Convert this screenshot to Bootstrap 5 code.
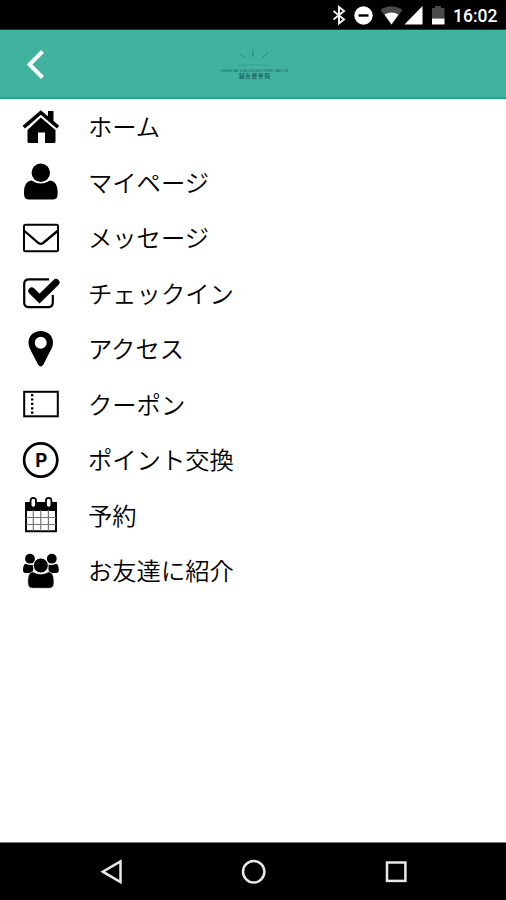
<!DOCTYPE html>
<html lang="ja">
<head>
<meta charset="utf-8">
<meta name="viewport" content="width=device-width, initial-scale=1">
<title>メニュー</title>
<link href="https://cdn.jsdelivr.net/npm/bootstrap@5.3.0/dist/css/bootstrap.min.css" rel="stylesheet">
<style>
body{font-family:"Noto Sans CJK JP",sans-serif;height:900px;color:#000;overflow:hidden}
svg{display:block;flex:none}
.status-bar{height:30px;border-bottom:1px solid #163b34}
.app-bar{height:69px;background:#40b29e;border-bottom:2px solid #1fa58d;padding-left:25px}
.brand-logo{margin-left:171px}
.clock{font:500 17.500px/30px Roboto,sans-serif;width:45px;margin-left:7px;padding-top:2px}
.menu-row{height:55.5px;padding:0 0 0 21px;gap:27px;font-size:24.3px;line-height:1;font-weight:350}
.menu-row span{padding-bottom:1px}
.system-bar{height:58.5px;border-top:1px solid #777}
</style>
<script src="https://cdn.jsdelivr.net/npm/bootstrap@5.3.0/dist/js/bootstrap.bundle.min.js"></script>
</head>
<body class="d-flex flex-column bg-white">
<div class="status-bar bg-black text-white d-flex justify-content-end align-items-center flex-shrink-0 pe-2">
<svg width="116" height="30" viewBox="330 0 116 30">
<path d="M333.500 11l10.500 8.500-5 4V7l5 4-10.500 8.500" fill="none" stroke="#eee" stroke-width="2"/>
<circle cx="363.500" cy="15.500" r="9.200" fill="#fff"/><path d="M358.500 15.500h10" stroke="#000" stroke-width="2.400"/>
<path d="M380.500 10q11-7.500 22 0L391.500 24.500z" fill="#4a4a4a"/><path d="M384.500 14.500q7-4 14 0L391.500 24.500z" fill="#fff"/>
<path d="M404.500 24.500H422.500V6z" fill="#fff"/>
<path d="M432 8h3V6h6v2h3.500v10.500H432z" fill="#4a4a4a"/><path d="M432 18.500h12.500v6H432z" fill="#fff"/>
</svg>
<span class="clock text-nowrap">16:02</span>
</div>
<header class="app-bar d-flex align-items-center flex-shrink-0">
<svg width="22" height="32" viewBox="0 0 22 32"><path d="M17.500 3.500L4.500 16.500l13 13" fill="none" stroke="#fff" stroke-width="4"/></svg>
<svg class="brand-logo" width="72" height="36" viewBox="218 46.500 72 36">
<g stroke="#24796c" stroke-width="1" opacity=".75"><path d="M253 50v7.500M240 54l5 4.500M268 53.500l-6.500 5.500"/><path d="M238 66q15-2 30 0" fill="none" opacity=".4"/></g>
<text x="220" y="72.300" font-family="Liberation Sans, sans-serif" font-size="3.400" textLength="68" lengthAdjust="spacingAndGlyphs" fill="#24675e">ORIENTAL &amp; ACUPUNCTURE SALON</text>
<text x="239" y="78" font-family="Noto Sans CJK JP, sans-serif" font-weight="700" font-size="5.500" textLength="31" fill="#23685e">鍼灸整骨院</text>
</svg>
</header>
<main class="flex-grow-1">
<div class="menu-row d-flex align-items-center">
<svg width="40" height="44" viewBox="0 0 40 44"><path d="M2.800 22.200L19.800 7.500 37 22.200" fill="none" stroke="#000" stroke-width="3.600"/><path d="M27 6h5.500v12L27 13.500zM19.800 12.500L34.500 25v11.500a1.500 1.500 0 0 1-1.500 1.500H24V27.500h-7V38H8a1.500 1.500 0 0 1-1.500-1.500V25z"/></svg>
<span>ホーム</span></div>
<div class="menu-row d-flex align-items-center">
<svg width="40" height="44" viewBox="0 0 40 44"><circle cx="19.800" cy="12.800" r="9.200"/><path d="M10.500 20.500q9.300 6 18.600 0c6 1 8 6 7.500 14.500q-.3 4.500-5 4.500H8q-4.600 0-4.900-4.500C2.600 26.500 4.500 21.500 10.500 20.500z"/></svg>
<span>マイページ</span></div>
<div class="menu-row d-flex align-items-center">
<svg width="40" height="44" viewBox="0 0 40 44" fill="none" stroke="#000" stroke-width="2"><rect x="3" y="8.700" width="34" height="26.500" rx="1.500"/><path d="M3.500 15L17.500 27q2.300 1.700 4.600 0L36.500 15" stroke-width="2.300"/></svg>
<span>メッセージ</span></div>
<div class="menu-row d-flex align-items-center">
<svg width="40" height="44" viewBox="0 0 40 44" fill="none" stroke="#000"><path d="M28 8.300H8Q3.200 8.300 3.200 13v18.500q0 4.700 4.800 4.700h19q4.800 0 4.800-4.700V24" stroke-width="2.200"/><path d="M10.800 20l7.700 7.500L35 11.500" stroke-width="7" stroke-linecap="round" stroke-linejoin="miter"/></svg>
<span>チェックイン</span></div>
<div class="menu-row d-flex align-items-center">
<svg width="40" height="44" viewBox="0 0 40 44"><path fill-rule="evenodd" d="M19.700 4C12.500 4 7.500 9 7.500 15.500c0 4 1.500 6.500 2.800 9L17 37.500q2.700 4 5.400 0L29 24.500c1.500-2.500 3-5 3-9C32 9 27 4 19.700 4zM19.700 9.700a6 6 0 1 1 0 12 6 6 0 0 1 0-12z"/></svg>
<span>アクセス</span></div>
<div class="menu-row d-flex align-items-center">
<svg width="40" height="44" viewBox="0 0 40 44" fill="none" stroke="#000"><rect x="3.200" y="9.800" width="33.600" height="24.500" stroke-width="2"/><path d="M11.200 12v20" stroke-width="2.400" stroke-dasharray="2.200 2.200"/></svg>
<span>クーポン</span></div>
<div class="menu-row d-flex align-items-center">
<svg width="40" height="44" viewBox="0 0 40 44"><circle cx="19.700" cy="22" r="16.600" fill="none" stroke="#000" stroke-width="2.700"/><text x="20.300" y="28.600" text-anchor="middle" font-family="Inter, sans-serif" font-weight="700" font-size="18.500">P</text></svg>
<span>ポイント交換</span></div>
<div class="menu-row d-flex align-items-center">
<svg width="40" height="44" viewBox="0 0 40 44"><path d="M4 9h32v9H4z"/><path d="M5 17v21.300h30V17" fill="none" stroke="#000" stroke-width="1.900"/><path d="M12.300 17v21M19.800 17v21M27.400 17v21M5 24.500h30M5 31.500h30" stroke="#777" stroke-width="1.200"/><g fill="#fff" stroke="#000" stroke-width="1.800"><rect x="9.600" y="4.900" width="5.400" height="9.800" rx="2.700"/><rect x="25" y="4.900" width="5.400" height="9.800" rx="2.700"/></g></svg>
<span>予約</span></div>
<div class="menu-row d-flex align-items-center">
<svg width="40" height="44" viewBox="0 0 40 44"><circle cx="9" cy="9.700" r="4.900"/><circle cx="30.800" cy="9.700" r="4.900"/><path d="M4.500 14.800q6 2.500 9 .2l-2 9h-7Q2 24 2 21q0-5 2.500-6.200zM35.300 14.800q-6 2.500-9 .2l2 9h7q2.500 0 2.500-3 0-5-2.500-6.200z"/><circle cx="19.800" cy="16.500" r="7.500" stroke="#fff"/><path d="M12 22.800q7.800 4.500 15.600 0c4 .5 5.600 4 5.400 11.500q0 5-5 5H12q-5.200 0-5.200-5C6.500 26.800 8 23.300 12 22.800z" stroke="#fff" stroke-width=".7"/></svg>
<span>お友達に紹介</span></div>
</main>
<footer class="system-bar bg-black flex-shrink-0">
<svg width="506" height="57" viewBox="0 842.500 506 57" fill="none" stroke="#e8e8e8" stroke-width="2.500"><path d="M120.500 861v20.500L102.800 871.200z"/><circle cx="253.700" cy="871.200" r="10.700"/><rect x="387" y="862" width="18.400" height="18.400"/></svg>
</footer>
</body>
</html>
